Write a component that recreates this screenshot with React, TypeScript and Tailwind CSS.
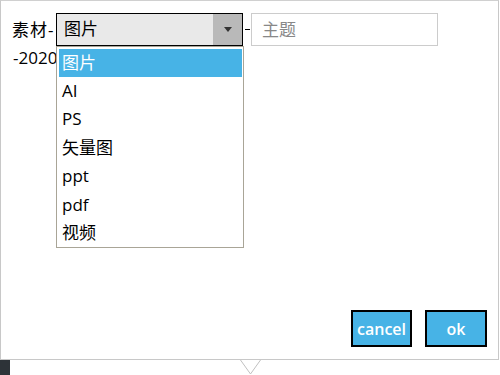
import React, { useState } from 'react';

const options = ['图片', 'AI', 'PS', '矢量图', 'ppt', 'pdf', '视频'];

export default function App() {
    const [selected] = useState('图片');

    return (
        <div className="w-[500px] h-[375px] bg-white relative overflow-hidden font-['Open_Sans','Noto_Sans_CJK_SC',sans-serif] text-[17px] text-black">
            <div className="w-[499px] h-[360px] border border-[#c8c8c8] border-t-[#d0d0d0] flex flex-col">
                <div className="pl-[11px] pt-[12px]">
                    <div className="flex items-center h-[32px]">
                        <span className="leading-none w-[44px] tracking-[1px]">素材-</span>
                        <div className="relative">
                            <div className="w-[187px] h-[33px] border border-black bg-[#e9e9e9] flex items-stretch">
                                <span className="flex-1 pl-[7px] flex items-center">{selected}</span>
                                <span className="w-[29px] bg-[#b9b9b9] flex items-center justify-center">
                                    <svg width="8" height="5" viewBox="0 0 8 5">
                                        <path d="M0 0h8L4 5z" fill="#333" />
                                    </svg>
                                </span>
                            </div>
                            <ul className="absolute left-0 top-[33px] w-[188px] h-[202px] border border-[#a9a597] bg-white pl-[2px] pr-[1px] pt-[2px] z-10">
                                {options.map((o) => (
                                    <li
                                        key={o}
                                        className={
                                            o === selected
                                                ? 'h-[28px] leading-[28px] pl-[3px] bg-[#47b3e6] text-white'
                                                : 'h-[28.5px] leading-[28.5px] pl-[3px]'
                                        }
                                    >
                                        {o}
                                    </li>
                                ))}
                            </ul>
                        </div>
                        <span className="w-[8px] flex justify-center">
                            <span className="w-[5px] h-[1px] bg-black" />
                        </span>
                        <input
                            type="text"
                            placeholder="主题"
                            className="w-[187px] h-[33px] border border-[#cccccc] px-[10px] text-[17px] outline-none placeholder:text-[#888]"
                        />
                    </div>
                    <div className="mt-[2px] pl-[1px] leading-[22px]">-2020</div>
                </div>

                <div className="mt-auto mb-[12px] mr-[11px] flex justify-end gap-[13px]">
                    <button className="w-[61px] h-[37px] border-2 border-black bg-[#47b3e6] text-white text-[16px] font-semibold leading-none">
                        cancel
                    </button>
                    <button className="w-[62px] h-[37px] border-2 border-black bg-[#47b3e6] text-white text-[16px] font-semibold leading-none">
                        ok
                    </button>
                </div>
            </div>

            <div className="flex h-[15px]">
                <div className="w-[10px] bg-[#2d3338]" />
                <div className="ml-[230px]">
                    <svg width="21" height="15" viewBox="0 0 21 15">
                        <path d="M0.5 0 L10.5 14 L20.5 0" fill="white" stroke="#c0c0c0" strokeWidth="1" />
                    </svg>
                </div>
            </div>
        </div>
    );
}
